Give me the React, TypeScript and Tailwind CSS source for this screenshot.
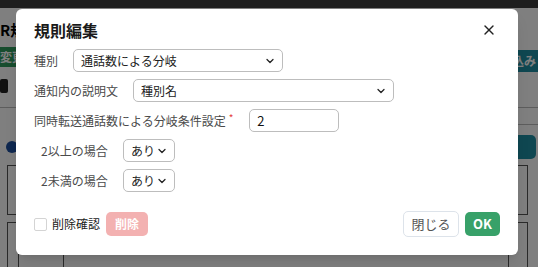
import React from 'react';
import { X, ChevronDown } from 'lucide-react';

const font = { fontFamily: '"Noto Sans CJK JP", "Noto Sans", sans-serif' };

function Select({ value, className }: { value: string; className: string }) {
  return (
    <div className={`flex shrink-0 items-center justify-between h-[23px] border border-[#bdbdbd] rounded-[5px] bg-white pl-[7px] pr-[6px] text-[12px] text-[#222] whitespace-nowrap ${className}`}>
      <span>{value}</span>
      <ChevronDown className="w-[12px] h-[12px] text-[#222]" strokeWidth={2.5} />
    </div>
  );
}

export default function App() {
  return (
    <div className="relative w-[538px] h-[267px] overflow-hidden bg-white" style={font}>
      {/* page behind the dialog */}
      <div className="h-[8px] bg-[#3c3c3c]" />
      <div className="flex justify-between items-start">
        <div className="flex flex-col">
          <div className="text-[15px] font-bold text-black mt-[14px] leading-none">R規</div>
          <div className="mt-[10px] w-[30px] h-[20px] bg-[#2f9a5c] text-white text-[12px] font-bold leading-[20px]">変更</div>
          <div className="mt-[12px] w-[8px] h-[14px] bg-[#222] rounded-[2px]" />
        </div>
        <div className="flex flex-col items-end">
          <div className="mt-[42px] w-[60px] h-[22px] bg-[#1f8fa3] text-white text-[12px] font-bold leading-[22px] text-right pr-[2px]">込み</div>
          <div className="mt-[63px] mr-[2px] w-[40px] h-[24px] bg-[#1f8fa3] rounded-[5px]" />
        </div>
      </div>
      <div className="absolute left-0 right-0 top-[107px] h-px bg-[#bbb]" />
      <div className="absolute right-0 w-[30px] top-[124px] h-px bg-[#bbb]" />
      <div className="absolute left-[6px] top-[141px] w-[12px] h-[12px] rounded-full bg-[#1d4f9f]" />
      <div className="absolute left-[7px] top-[165px] w-[20px] h-[50px] border border-[#555]" />
      <div className="absolute left-[7px] top-[222px] w-[20px] h-[60px] border border-[#555]" />
      <div className="absolute left-[18px] top-[245px] w-[46px] h-[30px] border border-[#555] rounded-[8px] bg-white" />
      <div className="absolute left-[78px] top-[245px] w-[76px] h-[10px] bg-[#1f8fa3] rounded-[5px]" />
      <div className="absolute right-[10px] top-[165px] w-[20px] h-[50px] border border-[#555]" />
      <div className="absolute right-[10px] top-[222px] w-[20px] h-[60px] border border-[#555]" />

      {/* overlay */}
      <div className="absolute inset-0 bg-black/50" />

      {/* dialog */}
      <div className="absolute left-[16px] top-[9px] w-[502px] h-[246px] bg-white rounded-[6px] shadow-lg flex flex-col px-[18px]">
        <div className="flex items-center justify-between h-[40px] pt-[2px]">
          <h2 className="text-[16px] font-bold text-[#1a1a1a]">規則編集</h2>
          <X className="w-[16px] h-[16px] text-[#222] mr-[3px]" strokeWidth={2} />
        </div>

        <div className="flex flex-col gap-[7px] text-[12px] text-[#4a4a4a] whitespace-nowrap">
          <div className="flex items-center gap-[15px]">
            <span className="w-[24px]">種別</span>
            <Select value="通話数による分岐" className="w-[210px]" />
          </div>
          <div className="flex items-center gap-[15px]">
            <span>通知内の説明文</span>
            <Select value="種別名" className="w-[261px]" />
          </div>
          <div className="flex items-center">
            <span>同時転送通話数による分岐条件設定</span>
            <span className="text-[#e53e3e] text-[10px] ml-[3px] -mt-[6px]">*</span>
            <div className="ml-[16px] w-[90px] h-[23px] border border-[#bdbdbd] rounded-[5px] pl-[7px] text-[13px] text-[#111] leading-[21px]">2</div>
          </div>
          <div className="flex items-center pl-[7px]">
            <span className="w-[82px]">2以上の場合</span>
            <Select value="あり" className="w-[52px]" />
          </div>
          <div className="flex items-center pl-[7px]">
            <span className="w-[82px]">2未満の場合</span>
            <Select value="あり" className="w-[52px]" />
          </div>
        </div>

        <div className="flex items-center mt-[19px]">
          <div className="w-[13px] h-[13px] border border-[#d4d4d4] rounded-[2px]" />
          <span className="ml-[5px] text-[12px] text-[#222]">削除確認</span>
          <div className="ml-[6px] w-[42px] h-[24px] rounded-[5px] bg-[#f3b1b1] text-white text-[12px] font-bold flex items-center justify-center">削除</div>
          <div className="ml-auto w-[56px] h-[26px] rounded-[5px] border border-[#dde3ea] text-[13px] text-[#555] flex items-center justify-center">閉じる</div>
          <div className="ml-[6px] w-[35px] h-[24px] rounded-[5px] bg-[#38a169] text-white text-[13px] font-bold flex items-center justify-center">OK</div>
        </div>
      </div>
    </div>
  );
}
